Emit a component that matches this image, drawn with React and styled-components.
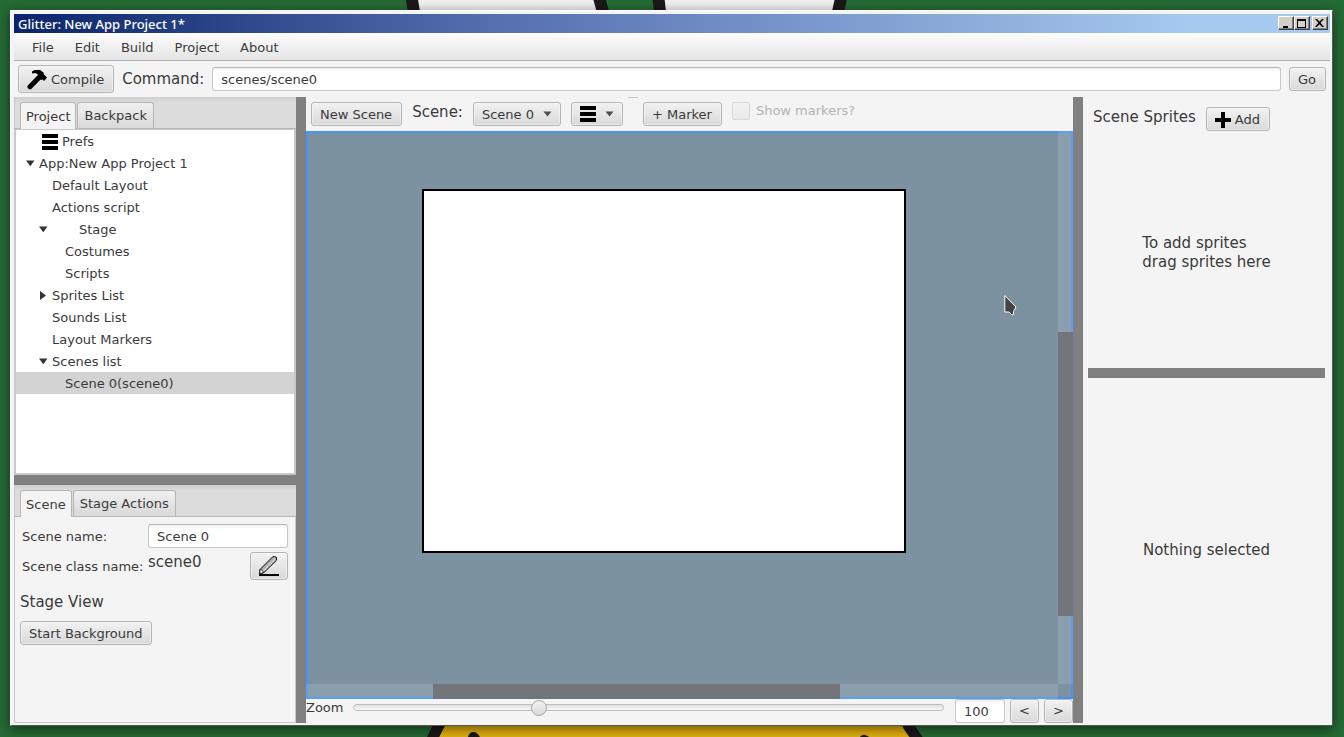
import React, { useState } from "react";
import styled, { createGlobalStyle, css } from "styled-components";

const GlobalStyle = createGlobalStyle`
  *, *::before, *::after { box-sizing: border-box; }
  body {
    margin: 0;
    font: 13px/22px "DejaVu Sans", Verdana, sans-serif;
    color: #3a3a3a;
  }
  button, input, select { font: inherit; color: inherit; margin: 0; }
  ul { list-style: none; margin: 0; padding: 0; }
  p, h1, h2 { margin: 0; font-weight: normal; }
`;

/* ---------- desktop and window frame ---------- */

const Desktop = styled.div`
  position: relative;
  display: flex;
  min-height: 100vh;
  padding: 10px 11px 11px 10px;
  background: #256b35;
  overflow: hidden;
`;

const Wallpaper = styled.svg`
  position: absolute;
  inset: 0;
  width: 100%;
  height: 100%;
`;

const Window = styled.div`
  position: relative;
  flex: 1;
  min-width: 0;
  display: flex;
  flex-direction: column;
  padding: 3px 2px 2px 3px;
  background: #f4f4f4;
  border: 1px solid;
  border-color: #fff #555 #555 #fff;
  box-shadow: 0 3px 12px rgba(0, 0, 0, 0.55);
`;

const TitleBar = styled.header`
  display: flex;
  align-items: center;
  height: 19px;
  padding: 0 2px 0 4px;
  background: linear-gradient(to right, #0a246a, #5670b0 37%, #a6caf0 90%);
`;

const WindowTitle = styled.h1`
  flex: 1;
  padding-top: 2px;
  font: 500 13px/19px "Noto Sans", sans-serif;
  color: #fff;
`;

const CaptionButton = styled.button`
  display: flex;
  align-items: center;
  justify-content: center;
  width: 16px;
  height: 14px;
  padding: 0;
  margin-left: ${(p) => (p.$apart ? "2px" : "0")};
  margin-bottom: 1px;
  background: #d4d0c8;
  border: 1px solid;
  border-color: #fff #404040 #404040 #fff;
  box-shadow: inset -1px -1px 0 #808080;
`;

const MenuBar = styled.nav`
  display: flex;
  align-items: center;
  height: 28px;
  padding: 2px 0 0 18px;
  gap: 21px;
  background: linear-gradient(#fdfdfd, #e4e4e4);
  border-bottom: 1px solid #b0b0b0;
`;

const MenuItem = styled.button`
  padding: 0;
  border: 0;
  background: none;
`;

/* ---------- shared controls ---------- */

const raised = css`
  border: 1px solid #b5b5b5;
  border-radius: 3px;
  background: linear-gradient(#f2f2f2, #d9d9d9);
  box-shadow: inset 0 0 0 1px rgba(255, 255, 255, 0.4);
`;

const Button = styled.button`
  ${raised}
  display: inline-flex;
  align-items: center;
  justify-content: center;
  flex: none;
  gap: ${(p) => p.$gap || 4}px;
  height: ${(p) => (p.$tall ? 28 : 24)}px;
  min-width: ${(p) => p.$min || 0}px;
  padding: ${(p) => (p.$plain ? "0 8px" : "1px 9px 0 8px")};
  white-space: nowrap;
`;

const TextInput = styled.input`
  flex: ${(p) => (p.$width ? "none" : 1)};
  width: ${(p) => (p.$width ? p.$width + "px" : "auto")};
  min-width: 0;
  height: 24px;
  padding: 1px 8px 0;
  border: 1px solid #c8c8c8;
  border-top-color: #b5b5b5;
  border-radius: 3px;
  background: linear-gradient(#f2f2f2, #fff 4px);
`;

const LargeLabel = styled.label`
  font-size: 15px;
  white-space: nowrap;
`;

const LargeText = styled.p`
  font-size: 15px;
  line-height: 19px;
  white-space: pre-line;
`;

const SelectBox = styled.span`
  display: inline-grid;
  align-items: center;
  flex: none;
  & > * { grid-area: 1 / 1; }
  & > svg { justify-self: end; margin-right: 9px; pointer-events: none; }
`;

const Select = styled.select`
  ${raised}
  appearance: none;
  height: 24px;
  width: 88px;
  padding: 1px 8px 0;
`;

/* ---------- main layout ---------- */

const CommandBar = styled.form`
  display: flex;
  align-items: center;
  gap: 8px;
  height: 36px;
  padding: 0 4px;
`;

const Workspace = styled.main`
  flex: 1;
  display: grid;
  grid-template-columns: 282px 10px minmax(0, 1fr) 10px 247px;
`;

const Divider = styled.div`
  background: #808080;
  margin: 0 ${(p) => p.$inset || 0}px;
`;

const SideColumn = styled.section`
  display: grid;
  grid-template-rows: ${(p) => p.$rows};
`;

const TabPane = styled.section`
  display: flex;
  flex-direction: column;
  min-height: 0;
`;

const TabStrip = styled.div`
  display: flex;
  align-items: flex-end;
  gap: 1px;
  height: 32px;
  padding-left: 5px;
  background: linear-gradient(#cfcfcf, #dcdcdc 6px);
  border-bottom: 1px solid #b5b5b5;
  border-left: 1px solid #c8c8c8;
`;

const Tab = styled.button`
  height: ${(p) => (p.$active ? 27 : 26)}px;
  margin-bottom: ${(p) => (p.$active ? -1 : 0)}px;
  padding: 1px ${(p) => (p.$active ? 5 : 6)}px 0;
  border: 1px solid #b5b5b5;
  border-bottom: 0;
  border-radius: 3px 3px 0 0;
  background: ${(p) => (p.$active ? "#f4f4f4" : "linear-gradient(#f0f0f0, #d9d9d9)")};
`;

const Tree = styled.ul`
  flex: 1;
  background: #fff;
  border: 2px solid #c8c8c8;
  border-top-width: 1px;
`;

const TreeRow = styled.li`
  display: flex;
  align-items: center;
  height: 22px;
  padding: 1px 0 0 ${(p) => 10 + p.$depth * 13}px;
  line-height: 21px;
  background: ${(p) => (p.$selected ? "#d3d3d3" : "transparent")};
`;

const TreeArrow = styled.span`
  display: flex;
  width: 13px;
`;

const TreeIcon = styled.span`
  display: flex;
  width: ${(p) => p.$width}px;
  margin: 0 4px 0 3px;
`;

const ScenePanel = styled.div`
  flex: 1;
  display: flex;
  flex-direction: column;
  align-items: flex-start;
  padding: 7px 7px 0 5px;
  border: 1px solid #c8c8c8;
  border-top: 0;
`;

const FieldGrid = styled.div`
  align-self: stretch;
  display: grid;
  grid-template-columns: 126px 1fr auto;
  row-gap: 4px;
  align-items: center;
  padding: 0 0 0 2px;
  margin-bottom: 12px;
  white-space: nowrap;
  & > label { padding-top: 2px; }
  & > input { grid-column: 2 / -1; }
  & > output { font-size: 15px; line-height: 20px; align-self: start; }
`;

const PanelHeading = styled.h2`
  font-size: 15px;
  line-height: 20px;
  margin-bottom: 9px;
`;

const Center = styled.section`
  display: flex;
  flex-direction: column;
  min-width: 0;
`;

const SceneBar = styled.div`
  display: flex;
  align-items: flex-start;
  gap: 10px;
  height: 34px;
  padding: 5px 5px 0;
  line-height: 20px;
`;

const Stub = styled.span`
  width: 10px;
  height: 1px;
  margin: -5px -5px 0;
  background: #c8c8c8;
`;

const Check = styled.label`
  display: flex;
  align-items: center;
  gap: 6px;
  height: 18px;
  line-height: 18px;
  color: #b3b3b3;
  white-space: nowrap;
`;

const CheckInput = styled.input`
  appearance: none;
  width: 18px;
  height: 18px;
  border: 1px solid #d8d8d8;
  border-radius: 2px;
  background: linear-gradient(#f2f2f2, #e9e9e9);
`;

const Canvas = styled.div`
  flex: 1;
  position: relative;
  display: grid;
  grid-template: minmax(0, 1fr) 15px / minmax(0, 1fr) 15px;
  background: #7c92a1;
  box-shadow: inset 0 0 0 2px #4592fb;
`;

const Stage = styled.div`
  width: 484px;
  height: 364px;
  margin: 58px 0 0 116px;
  background: #fff;
  border: 2px solid #000;
`;

const ScrollTrack = styled.div`
  display: grid;
  grid-template: ${(p) => (p.$vertical ? "201fr 284fr 68fr / 1fr" : "1fr / 127fr 407fr 218fr")};
  background: rgba(255, 255, 255, 0.11);
`;

const ScrollThumb = styled.div`
  grid-area: ${(p) => (p.$vertical ? "2 / 1" : "1 / 2")};
  background: rgba(108, 108, 108, 0.8);
`;

const Pointer = styled.svg`
  position: absolute;
  left: 698px;
  top: 163px;
`;

const ZoomBar = styled.div`
  display: flex;
  align-items: flex-start;
  gap: 5px;
  height: 24px;
`;

const ZoomLabel = styled.label`
  line-height: 18px;
  margin-right: 5px;
`;

const Slider = styled.input`
  appearance: none;
  flex: 1;
  min-width: 0;
  height: 16px;
  margin-right: 6px;
  background: none;
  &::-webkit-slider-runnable-track {
    height: 7px;
    border: 1px solid #bdbdbd;
    border-radius: 4px;
    background: linear-gradient(#dedede, #fafafa);
  }
  &::-webkit-slider-thumb {
    appearance: none;
    width: 16px;
    height: 16px;
    margin-top: -5px;
    border: 1px solid #a8a8a8;
    border-radius: 50%;
    background: linear-gradient(#f2f2f2, #d9d9d9);
  }
`;

const SpritesPanel = styled.section`
  display: flex;
  flex-direction: column;
`;

const SpritesHeader = styled.div`
  display: flex;
  align-items: flex-start;
  gap: 10px;
  padding: 10px 10px 6px;
`;

const SpritesTitle = styled.h2`
  font-size: 15px;
  line-height: 21px;
`;

const Placeholder = styled.div`
  flex: 1;
  display: flex;
  align-items: center;
  justify-content: center;
`;

/* ---------- icons ---------- */

const DownArrow = () => (
  <svg width="9" height="7" viewBox="0 0 9 7" fill="#333" aria-hidden="true">
    <path d="M0 .5H8.500L4.250 6.200z" />
  </svg>
);

const SideArrow = () => (
  <svg width="7" height="9" viewBox="0 0 7 9" fill="#333" aria-hidden="true">
    <path d="M1 0 L7 4.500 L1 9 Z" />
  </svg>
);

const DropArrow = () => (
  <svg width="9" height="6" viewBox="0 0 9 6" fill="#4d4d4d" aria-hidden="true">
    <path d="M.5 0.500 H8.500 L4.500 5.500 Z" />
  </svg>
);

const BarsIcon = () => (
  <svg width="16" height="16" viewBox="0 0 16 16" aria-hidden="true">
    <path d="M0 0h16v4H0zM0 6h16v4H0zM0 12h16v4H0z" />
  </svg>
);

const HammerIcon = () => (
  <svg width="20" height="20" viewBox="0 0 20 20" aria-hidden="true">
    <path d="M5 1.500 7.500 0h5.500l3.500 2.500.5 2L20 7.500 17 11 15.500 9.500 14 10 10.500 6.500 11.500 5 8.500 3 5 3.500z" />
    <path d="M12 7.500 3 16.700" stroke="#000" strokeWidth="5" strokeLinecap="round" />
  </svg>
);

const PlusIcon = () => (
  <svg width="16" height="16" viewBox="0 0 16 16" aria-hidden="true">
    <path d="M6 0h4v6h6v4h-6v6H6v-6H0V6h6z" />
  </svg>
);

const PencilIcon = () => (
  <svg width="20" height="20" viewBox="0 0 20 20" aria-hidden="true">
    <path d="M1 13.500 13.500 1l2-.7L17.500 1.500v2.700L5 16.500.8 18z" fill="#b0b0b0" stroke="#000" strokeWidth="1" />
    <path d="M4 15.500 16 3.500" stroke="#eee" strokeWidth="1.200" strokeDasharray="1 .6" />
    <path d="M.8 14.200 2 13.500 4.800 16.200 1 18z" fill="#fff" stroke="#000" strokeWidth=".8" />
    <path d="M0 18h20v2H0z" />
  </svg>
);

const captionPaths = {
  Minimize: "M3 8h5v2H3z",
  Maximize: "M1 1h9v9H1zM2 3v6h7V3z",
  Close: "M1 1h2l2.500 2.500L8 1h2L6.500 4.800 10 9H8L5.500 6.200 3 9H1l3.500-4.200z",
};

const CaptionIcon = ({ name }) => (
  <svg width="12" height="11" viewBox="0 0 12 11" aria-hidden="true">
    <path fillRule="evenodd" d={captionPaths[name]} />
  </svg>
);

const DesktopArt = () => (
  <Wallpaper viewBox="0 0 1344 737" preserveAspectRatio="xMidYMid slice" aria-hidden="true">
    <g stroke="#1c1718" strokeWidth="12">
      <path d="M411 -6 417 30H608L598 -6z" fill="#f1f1f1" />
      <path d="M658 -6 662 30H834L842 -6z" fill="#f1f1f1" />
      <path d="M438 727 422 760H932L909 727 890 690H460z" fill="#e5b30f" strokeWidth="11" />
    </g>
    <path d="M467 740q2-9 7-8t7 8zM858 740q3-6 7-5t7 5z" fill="#1c1718" />
  </Wallpaper>
);

/* ---------- content ---------- */

const menus = ["File", "Edit", "Build", "Project", "About"];

const treeItems = [
  { label: "Prefs", depth: 0, icon: <BarsIcon />, iconWidth: 16 },
  { label: "App:New App Project 1", depth: 0, open: true },
  { label: "Default Layout", depth: 1 },
  { label: "Actions script", depth: 1 },
  { label: "Stage", depth: 1, open: true, iconWidth: 20 },
  { label: "Costumes", depth: 2 },
  { label: "Scripts", depth: 2 },
  { label: "Sprites List", depth: 1, open: false },
  { label: "Sounds List", depth: 1 },
  { label: "Layout Markers", depth: 1 },
  { label: "Scenes list", depth: 1, open: true },
  { label: "Scene 0(scene0)", depth: 2 },
];

function ProjectTree() {
  const [selected, setSelected] = useState("Scene 0(scene0)");
  return (
    <Tree role="tree">
      {treeItems.map((item) => (
        <TreeRow
          key={item.label}
          role="treeitem"
          aria-selected={item.label === selected}
          aria-expanded={item.open}
          $depth={item.depth}
          $selected={item.label === selected}
          onClick={() => setSelected(item.label)}
        >
          <TreeArrow>
            {item.open === true && <DownArrow />}
            {item.open === false && <SideArrow />}
          </TreeArrow>
          {item.iconWidth && <TreeIcon $width={item.iconWidth}>{item.icon}</TreeIcon>}
          {item.label}
        </TreeRow>
      ))}
    </Tree>
  );
}

function Tabs({ names }) {
  const [active, setActive] = useState(names[0]);
  return (
    <TabStrip role="tablist">
      {names.map((name) => (
        <Tab
          key={name}
          type="button"
          role="tab"
          aria-selected={name === active}
          $active={name === active}
          onClick={() => setActive(name)}
        >
          {name}
        </Tab>
      ))}
    </TabStrip>
  );
}

export default function App() {
  const [zoom, setZoom] = useState(100);
  return (
    <Desktop>
      <GlobalStyle />
      <DesktopArt />
      <Window>
        <TitleBar>
          <WindowTitle>Glitter: New App Project 1*</WindowTitle>
          <CaptionButton aria-label="Minimize"><CaptionIcon name="Minimize" /></CaptionButton>
          <CaptionButton aria-label="Maximize"><CaptionIcon name="Maximize" /></CaptionButton>
          <CaptionButton aria-label="Close" $apart><CaptionIcon name="Close" /></CaptionButton>
        </TitleBar>
        <MenuBar>
          {menus.map((name) => <MenuItem key={name}>{name}</MenuItem>)}
        </MenuBar>
        <CommandBar onSubmit={(e) => e.preventDefault()}>
          <Button type="button" $tall><HammerIcon />Compile</Button>
          <LargeLabel htmlFor="command">Command:</LargeLabel>
          <TextInput id="command" defaultValue="scenes/scene0" />
          <Button type="submit">Go</Button>
        </CommandBar>

        <Workspace>
          <SideColumn $rows="378fr 10px 238fr">
            <TabPane>
              <Tabs names={["Project", "Backpack"]} />
              <ProjectTree />
            </TabPane>
            <Divider />
            <TabPane>
              <Tabs names={["Scene", "Stage Actions"]} />
              <ScenePanel>
                <FieldGrid>
                  <label htmlFor="scene-name">Scene name:</label>
                  <TextInput id="scene-name" defaultValue="Scene 0" />
                  <label htmlFor="scene-class">Scene class name:</label>
                  <output id="scene-class">scene0</output>
                  <Button aria-label="Edit class name" $tall $plain $min={38}><PencilIcon /></Button>
                </FieldGrid>
                <PanelHeading>Stage View</PanelHeading>
                <Button>Start Background</Button>
              </ScenePanel>
            </TabPane>
          </SideColumn>
          <Divider />
          <Center>
            <SceneBar>
              <Button>New Scene</Button>
              <LargeLabel htmlFor="scene">Scene:</LargeLabel>
              <SelectBox>
                <Select id="scene"><option>Scene 0</option></Select>
                <DropArrow />
              </SelectBox>
              <Button aria-label="Scene menu" $gap={9} $plain><BarsIcon /><DropArrow /></Button>
              <Stub />
              <Button>+ Marker</Button>
              <Check><CheckInput type="checkbox" disabled />Show markers?</Check>
            </SceneBar>
            <Canvas>
              <Stage />
              <ScrollTrack $vertical><ScrollThumb $vertical /></ScrollTrack>
              <ScrollTrack><ScrollThumb /></ScrollTrack>
              <Pointer width="14" height="23" viewBox="0 0 14 23" aria-hidden="true">
                <path d="M.8 1.500V18h4.200l3 3 1.500-.5V17.500L12 13z" fill="#444" stroke="#fff" strokeWidth="1" />
              </Pointer>
            </Canvas>
            <ZoomBar>
              <ZoomLabel htmlFor="zoom">Zoom</ZoomLabel>
              <Slider
                id="zoom"
                type="range"
                min="0"
                max="325"
                value={zoom}
                onChange={(e) => setZoom(Number(e.target.value))}
              />
              <TextInput
                aria-label="Zoom percent"
                $width={50}
                value={zoom}
                onChange={(e) => setZoom(Number(e.target.value) || 0)}
              />
              <Button onClick={() => setZoom(zoom - 10)} $plain $min={29}>&lt;</Button>
              <Button onClick={() => setZoom(zoom + 10)} $plain $min={29}>&gt;</Button>
            </ZoomBar>
          </Center>
          <Divider />
          <SideColumn $rows="271fr 10px 345fr">
            <SpritesPanel>
              <SpritesHeader>
                <SpritesTitle>Scene Sprites</SpritesTitle>
                <Button><PlusIcon />Add</Button>
              </SpritesHeader>
              <Placeholder>
                <LargeText>{"To add sprites\ndrag sprites here"}</LargeText>
              </Placeholder>
            </SpritesPanel>
            <Divider $inset={5} />
            <Placeholder>
              <LargeText>Nothing selected</LargeText>
            </Placeholder>
          </SideColumn>
        </Workspace>
      </Window>
    </Desktop>
  );
}
